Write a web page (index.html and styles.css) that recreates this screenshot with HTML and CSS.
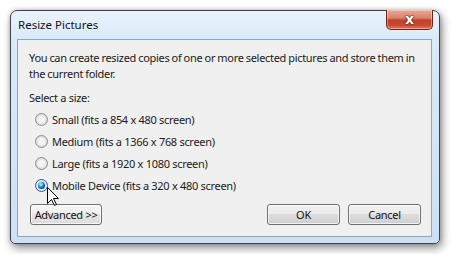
FILE: index.html
```html
<!DOCTYPE html>
<html>
<head>
<meta charset="utf-8">
<link rel="stylesheet" href="styles.css">
</head>
<body>
<div class="window">
  <div class="titlebar">
    <span class="title">Resize Pictures</span>
    <div class="close"><span>x</span></div>
  </div>
  <div class="client">
    <p class="intro">You can create resized copies of one or more selected pictures and store them in<br>the current folder.</p>
    <div class="label">Select a size:</div>
    <div class="options">
      <div class="opt"><span class="radio"></span>Small (fits a 854 x 480 screen)</div>
      <div class="opt"><span class="radio"></span>Medium (fits a 1366 x 768 screen)</div>
      <div class="opt"><span class="radio"></span>Large (fits a 1920 x 1080 screen)</div>
      <div class="opt"><span class="radio checked"></span>Mobile Device (fits a 320 x 480 screen)</div>
    </div>
    <div class="buttons">
      <button class="btn adv">Advanced &gt;&gt;</button>
      <span class="spacer"></span>
      <button class="btn">OK</button>
      <button class="btn">Cancel</button>
    </div>
  </div>
  <svg class="cursor" width="13" height="20" viewBox="0 0 13 20">
    <path d="M0.5 0.5 L0.5 16.5 L4.5 12.5 L7.5 18.5 L9.5 17.5 L6.5 11.5 L11.5 11.5 Z" fill="#fff" stroke="#000" stroke-width="1" stroke-linejoin="miter"/>
  </svg>
</div>
</body>
</html>
```
FILE: styles.css
```css
* { box-sizing: border-box; }
html, body { margin: 0; background: #fff; }
body {
  padding: 10px;
  font-family: "Noto Sans", "Open Sans", sans-serif;
  font-size: 11px;
  letter-spacing: -0.3px;
  color: #1a1a1a;
}
.window {
  position: relative;
  width: 430px;
  height: 234px;
  border: 1px solid #3c4450;
  border-radius: 7px 7px 5px 5px;
  background: linear-gradient(180deg, #eaf3fc 0px, #d9e9f8 30px, #cde0f3 100%);
  box-shadow: 2px 4px 10px rgba(0,0,0,0.45), 0 0 4px rgba(0,0,0,0.2);
  padding: 0 7px 6px 6px;
  display: flex;
  flex-direction: column;
}
.titlebar {
  height: 28px;
  display: flex;
  align-items: flex-start;
  position: relative;
}
.title {
  margin-top: 6px;
  margin-left: 1px;
  font-size: 11.5px;
  letter-spacing: 0;
  color: #111;
}
.close {
  position: absolute;
  right: -1px;
  top: -1px;
  width: 47px;
  height: 20px;
  border: 1px solid #6a2418;
  border-top: none;
  border-radius: 0 0 5px 5px;
  background: linear-gradient(180deg, #e9a795 0%, #d98670 40%, #c2402a 55%, #c84a33 80%, #dc7b63 100%);
  box-shadow: inset 0 0 0 1px rgba(255,255,255,0.35);
  display: flex;
  align-items: center;
  justify-content: center;
}
.close span {
  font-family: "DejaVu Sans", sans-serif;
  font-weight: bold;
  font-size: 14px;
  letter-spacing: 0;
  line-height: 1;
  color: #fff;
  margin-top: -2px;
  text-shadow: 0 0 1px #5a1a10, 0 0 1px #5a1a10, 0 0 2px #5a1a10;
}
.client {
  flex: 1;
  background: #f0f0f0;
  border: 1px solid #8ca6c4;
  padding: 10px 10px 11px 11px;
  display: flex;
  flex-direction: column;
}
.intro {
  margin: 0;
  line-height: 16px;
  white-space: nowrap;
  word-spacing: -0.4px;
}
.label {
  margin-top: 8px;
  line-height: 16px;
}
.options {
  margin-top: 2px;
  display: flex;
  flex-direction: column;
}
.opt {
  height: 22px;
  display: flex;
  align-items: center;
  padding-left: 6px;
}
.radio {
  width: 13px;
  height: 13px;
  border-radius: 50%;
  border: 1px solid #8a8f95;
  background: radial-gradient(circle at 50% 50%, #f4f4f4 0 3px, #dcdcdc 5px, #e8e8e8 6px);
  margin-right: 4px;
  flex: none;
  position: relative;
}
.radio.checked {
  border-color: #2c628b;
  background: radial-gradient(circle at 50% 50%, #e6f2fb 0 3px, #cfe0ef 6px);
}
.radio.checked::after {
  content: "";
  position: absolute;
  left: 2px;
  top: 2px;
  width: 7px;
  height: 7px;
  border-radius: 50%;
  background: radial-gradient(circle at 40% 35%, #9fe0ff 0 1px, #2d8ad8 2.5px, #0d4f96 4px);
}
.buttons {
  margin-top: 8px;
  display: flex;
  align-items: center;
  gap: 8px;
  padding-left: 1px;
}
.spacer { flex: 1; }
.btn {
  height: 21px;
  width: 73px;
  font-family: inherit;
  font-size: 11px;
  letter-spacing: -0.3px;
  color: #111;
  border: 1px solid #707070;
  border-radius: 3px;
  background: linear-gradient(180deg, #f2f2f2 0%, #ebebeb 45%, #dddddd 50%, #cfcfcf 100%);
  box-shadow: inset 0 0 0 1px rgba(255,255,255,0.7);
  padding: 0;
}
.btn.adv {
  width: 72px;
  background: linear-gradient(180deg, #f6f6f6 0%, #efefef 45%, #e6e6e6 50%, #dcdcdc 100%);
}
.cursor {
  position: absolute;
  left: 36px;
  top: 176px;
}
```
